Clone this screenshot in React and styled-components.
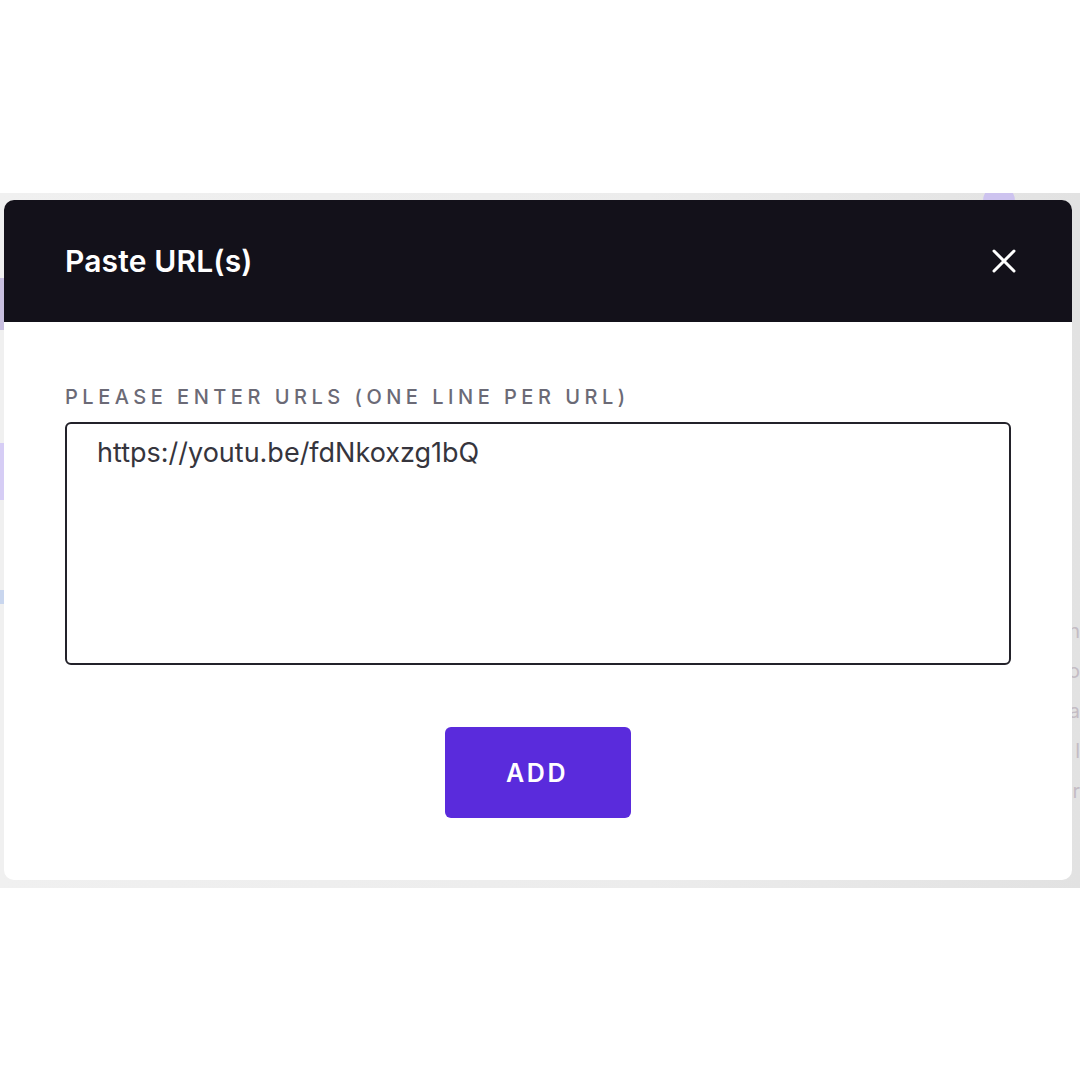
import React, { useEffect, useRef, useState } from "react";
import styled, { createGlobalStyle } from "styled-components";

const GlobalStyle = createGlobalStyle`
  body {
    margin: 0;
    background: #ffffff;
    font-family: Inter, "Noto Sans", sans-serif;
  }
`;

const Page = styled.div`
  width: 1080px;
  height: 1080px;
  padding-top: 193px;
  box-sizing: border-box;
  background: #ffffff;
`;

// the app page that sits behind the dialog
const Backdrop = styled.div`
  position: relative;
  height: 695px;
  display: flex;
  justify-content: space-between;
  background: linear-gradient(90deg, #f0f0f0 0%, #ececec 60%, #e2e2e2 100%);
  overflow: hidden;
`;

const LeftRail = styled.div`
  width: 4px;
  display: flex;
  flex-direction: column;
  padding-top: 85px;
`;

const Chip = styled.div`
  height: ${(p) => p.h}px;
  margin-bottom: ${(p) => p.after || 0}px;
  background: ${(p) => p.color};
`;

const RightRail = styled.div`
  display: flex;
  flex-direction: column;
  align-items: flex-end;
`;

const Avatar = styled.div`
  width: 32px;
  height: 32px;
  margin: -8px 65px 0 0;
  border-radius: 50%;
  background: #cdc3ef;
`;

const SideText = styled.div`
  margin-top: 402px;
  display: flex;
  flex-direction: column;
  align-items: flex-end;
  gap: 15px;
  font-size: 20px;
  line-height: 25px;
  color: #c4bcc4;
`;

const Modal = styled.div`
  position: absolute;
  inset: 7px 8px 8px 4px;
  background: #ffffff;
  border-radius: 10px;
  overflow: hidden;
  display: flex;
  flex-direction: column;
`;

const Header = styled.div`
  height: 122px;
  flex: none;
  background: #13111a;
  display: flex;
  align-items: center;
  justify-content: space-between;
  padding: 0 51px 0 61px;
`;

const Title = styled.h2`
  margin: 0;
  color: #ffffff;
  font-size: 30px;
  font-weight: 600;
  letter-spacing: 0.15px;
`;

const CloseButton = styled.button`
  border: 0;
  background: none;
  padding: 4px;
  display: flex;
  cursor: pointer;
`;

const Body = styled.div`
  flex: 1;
  display: flex;
  flex-direction: column;
  padding: 62px 61px 0 61px;
`;

const Label = styled.label`
  display: block;
  font-size: 20px;
  line-height: 26px;
  letter-spacing: 4.5px;
  color: #6b6a76;
  font-weight: 500;
  margin-bottom: 12px;
  white-space: nowrap;
`;

const UrlArea = styled.textarea`
  display: block;
  width: 100%;
  height: 243px;
  box-sizing: border-box;
  border: 2px solid #23222a;
  border-radius: 6px;
  padding: 12px 30px;
  font-family: Inter, sans-serif;
  font-size: 27px;
  line-height: 34px;
  color: #36353d;
  resize: none;
  outline: none;
  caret-color: #111;
`;

const Actions = styled.div`
  display: flex;
  justify-content: center;
  margin-top: 62px;
`;

const AddButton = styled.button`
  width: 186px;
  height: 91px;
  border: 0;
  border-radius: 6px;
  background: #5a2bdc;
  color: #ffffff;
  font-family: Inter, sans-serif;
  font-size: 25px;
  font-weight: 600;
  letter-spacing: 2.6px;
  padding-left: 4px;
  cursor: pointer;
`;

function CloseIcon() {
  return (
    <svg width="26" height="26" viewBox="0 0 26 26">
      <path
        d="M3 3 L23 23 M23 3 L3 23"
        stroke="#ffffff"
        strokeWidth="3"
        strokeLinecap="round"
      />
    </svg>
  );
}

export default function App() {
  const [urls, setUrls] = useState("https://youtu.be/fdNkoxzg1bQ");
  const area = useRef(null);

  useEffect(() => {
    const el = area.current;
    if (el) {
      el.focus();
      el.setSelectionRange(el.value.length, el.value.length);
    }
  }, []);

  return (
    <Page>
      <GlobalStyle />
      <Backdrop>
        <LeftRail>
          <Chip h={52} after={113} color="#c8bfe0" />
          <Chip h={57} after={90} color="#d6cdf5" />
          <Chip h={14} color="#c9d6ee" />
        </LeftRail>
        <RightRail>
          <Avatar />
          <SideText>
            <span>h</span>
            <span>o</span>
            <span>a</span>
            <span>l</span>
            <span>r</span>
          </SideText>
        </RightRail>
        <Modal>
          <Header>
            <Title>Paste URL(s)</Title>
            <CloseButton aria-label="Close">
              <CloseIcon />
            </CloseButton>
          </Header>
          <Body>
            <Label htmlFor="urls">PLEASE ENTER URLS (ONE LINE PER URL)</Label>
            <UrlArea
              id="urls"
              ref={area}
              value={urls}
              onChange={(e) => setUrls(e.target.value)}
              spellCheck={false}
            />
            <Actions>
              <AddButton>ADD</AddButton>
            </Actions>
          </Body>
        </Modal>
      </Backdrop>
    </Page>
  );
}
